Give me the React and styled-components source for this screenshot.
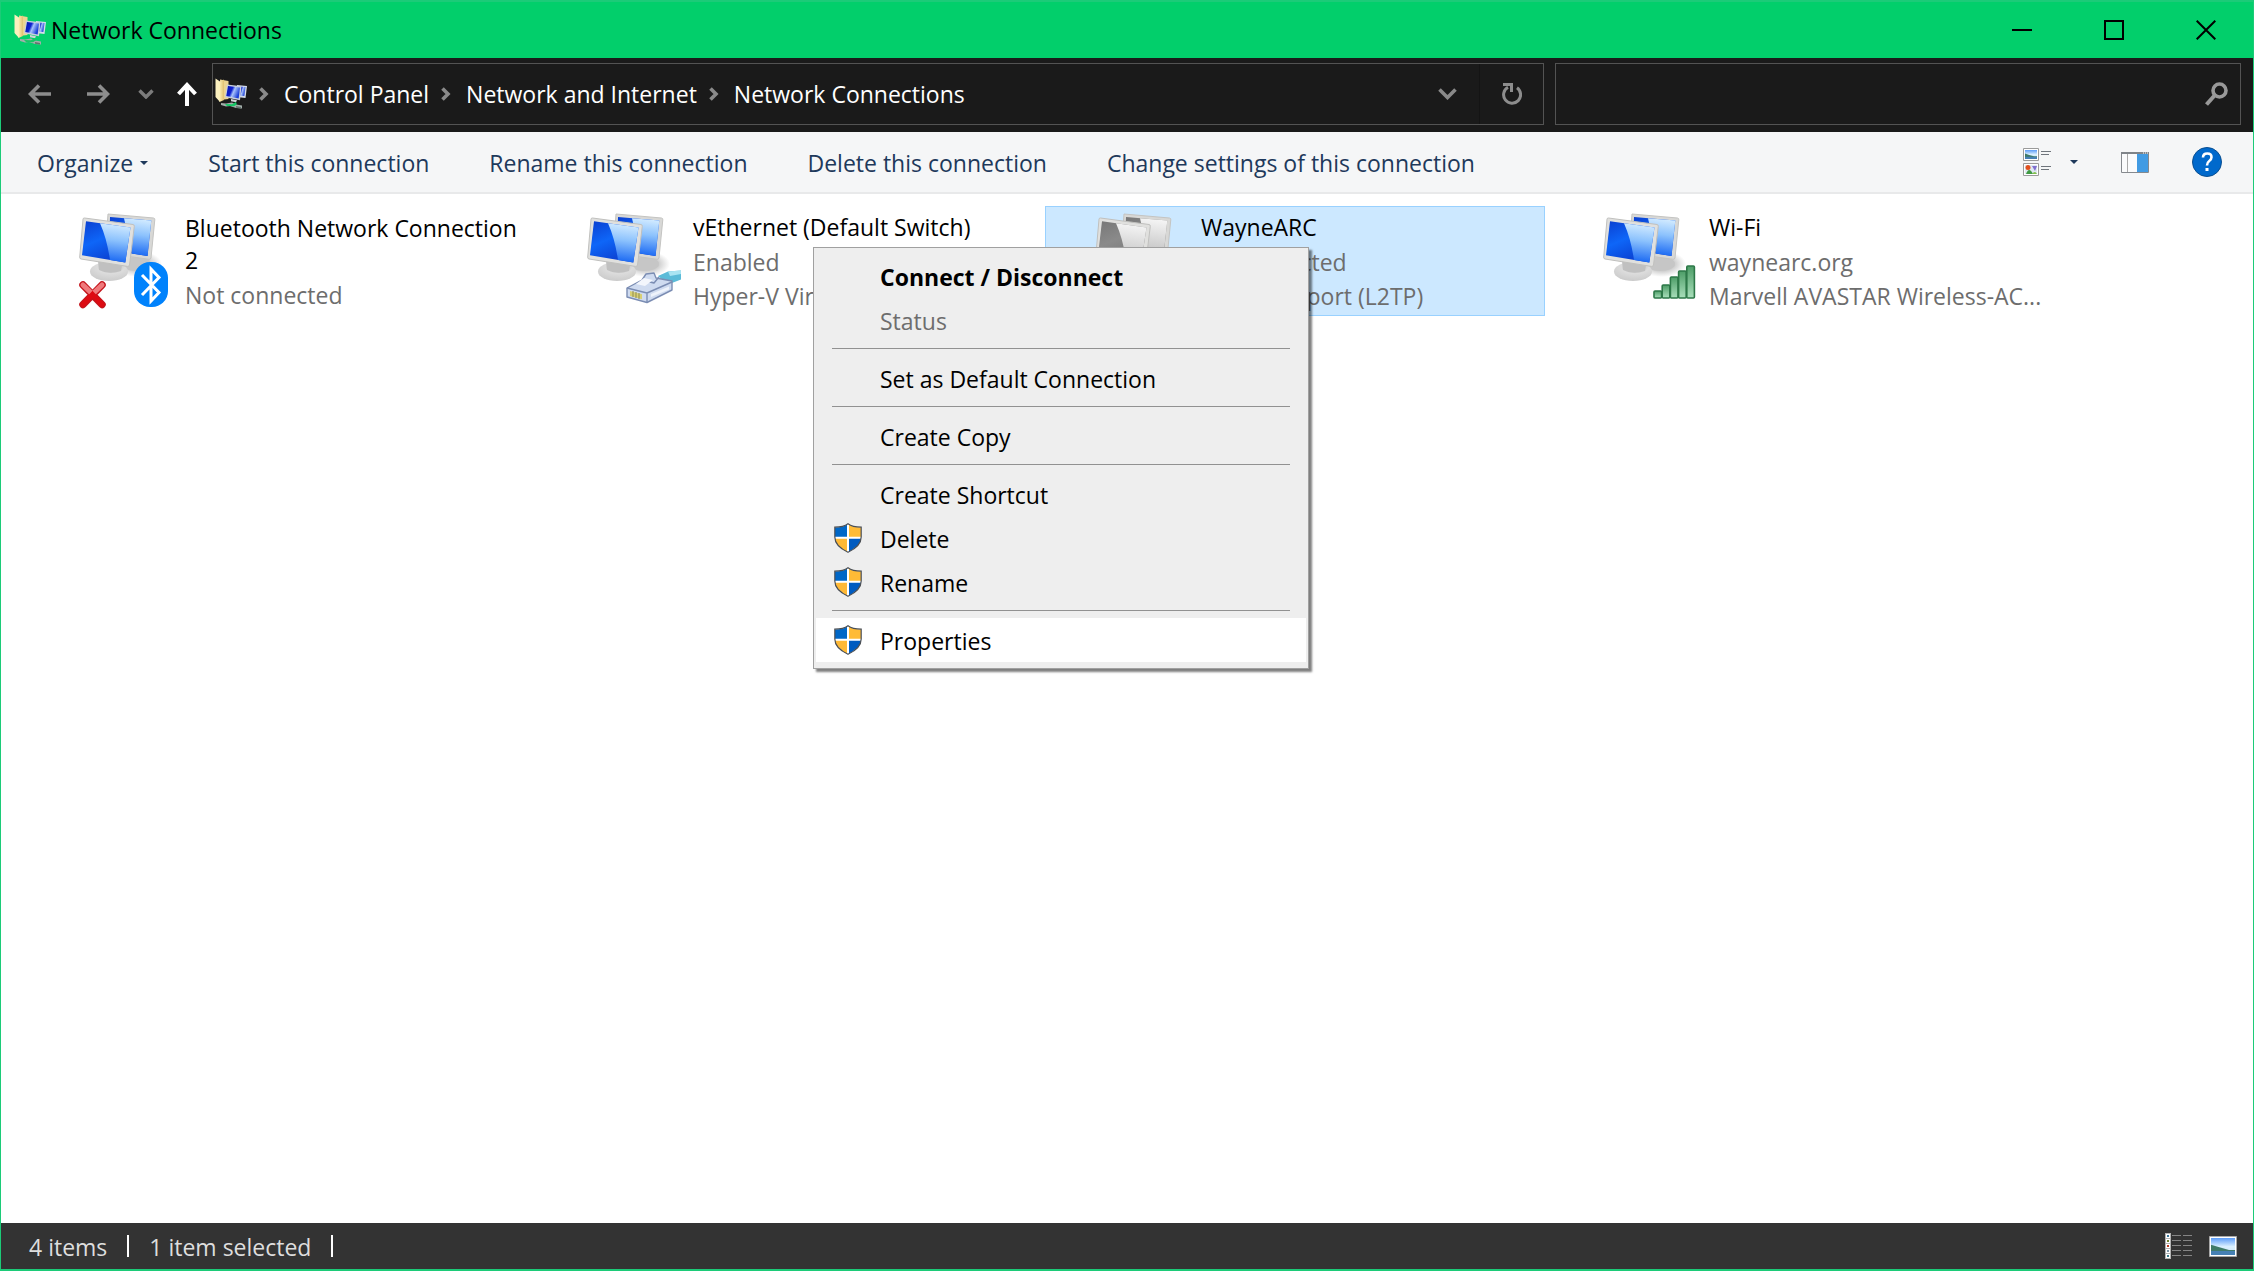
import React from "react";
import styled, { createGlobalStyle, css } from "styled-components";

const GlobalStyle = createGlobalStyle`
  *, *::before, *::after { box-sizing: border-box; }
  body { margin: 0; }
  body, button, input { font-family: "Open Sans", "Noto Sans", sans-serif; font-size: 23px; }
`;

const Window = styled.div`
  min-height: 100vh;
  display: flex;
  flex-direction: column;
  background: #ffffff;
  border: solid #1ccb78;
  border-width: 2px 1px;
  color: #000000;
  line-height: 32px;
`;

const plainButton = css`
  border: 0;
  padding: 0;
  margin: 0;
  background: transparent;
  color: inherit;
  line-height: 32px;
  white-space: nowrap;
  display: flex;
  align-items: center;
`;

const TitleBar = styled.header`
  height: 56px;
  flex: none;
  display: flex;
  align-items: center;
  background: #02cf6b;
  padding: 0 1px 0 13px;
`;

const WindowTitle = styled.h1`
  margin: 0 0 0 5px;
  font-size: 23px;
  font-weight: 400;
  flex: 1;
`;

const CaptionButton = styled.button`
  ${plainButton}
  width: 92px;
  height: 56px;
  justify-content: center;
`;

const NavBar = styled.nav`
  height: 74px;
  flex: none;
  display: flex;
  background: #1a1a1a;
  color: #ffffff;
  padding: 5px 12px 7px 27px;
`;

const NavButtons = styled.div`
  width: 184px;
  flex: none;
  display: flex;
  align-items: center;
`;

const NavButton = styled.button`
  ${plainButton}
  margin-right: ${(p) => p.$after || 0}px;
`;

const AddressBox = styled.div`
  flex: 1328 1 0;
  min-width: 0;
  border: 1px solid #535353;
  display: flex;
  align-items: center;
  padding-left: 2px;
`;

const Crumbs = styled.ol`
  list-style: none;
  margin: 0;
  padding: 0 0 0 12px;
  flex: 1;
  display: flex;
  align-items: center;
`;

const Crumb = styled.li`
  display: flex;
  align-items: center;
  gap: 15px;
  margin-right: 12px;
`;

const CrumbLink = styled.a`
  color: #ffffff;
  text-decoration: none;
  white-space: nowrap;
`;

const AddressButton = styled.button`
  ${plainButton}
  width: 64px;
  height: 60px;
  justify-content: center;
  border-left: ${(p) => (p.$divided ? "1px solid #141414" : "0")};
`;

const SearchBox = styled.form`
  flex: 672 1 0;
  min-width: 0;
  margin-left: 11px;
  border: 1px solid #535353;
  display: flex;
  align-items: center;
  padding-right: 12px;
`;

const SearchInput = styled.input`
  flex: 1;
  min-width: 0;
  height: 60px;
  border: 0;
  outline: 0;
  padding: 0 12px;
  background: transparent;
  color: #ffffff;
`;

const CommandBar = styled.div`
  height: 62px;
  flex: none;
  display: flex;
  align-items: center;
  background: #f5f6f7;
  border-bottom: 2px solid #e8e9ea;
  color: #1e395b;
  padding: 0 31px 0 36px;
`;

const Commands = styled.div`
  flex: 1;
  display: flex;
  gap: 60px;
  padding-top: 2px;
`;

const CommandButton = styled.button`
  ${plainButton}
  gap: ${(p) => p.$gap || 0}px;
`;

const ViewTools = styled.div`
  display: flex;
  align-items: center;
  gap: 43px;
`;

const Content = styled.main`
  flex: 1;
  position: relative;
  padding: 12px 28px;
`;

const Tiles = styled.ul`
  list-style: none;
  margin: 0;
  padding: 0;
  display: flex;
  flex-wrap: wrap;
  gap: 8px;
`;

const Tile = styled.li`
  width: 500px;
  height: 110px;
  display: flex;
  align-items: center;
  gap: 11px;
  padding: 0 8px 0 46px;
  border: 1px solid ${(p) => (p.$selected ? "#99d1ff" : "transparent")};
  background: ${(p) => (p.$selected ? "#cce8ff" : "transparent")};
`;

const TileText = styled.div`
  flex: 1;
  min-width: 0;
`;

const TileName = styled.div`
  line-height: 32px;
  padding: 1px 0 2px;
`;

const TileDetail = styled.div`
  line-height: 34px;
  color: #6d6d6d;
  white-space: nowrap;
`;

const ContextMenu = styled.div`
  position: absolute;
  left: 812px;
  top: 53px;
  width: 496px;
  padding: 6px 2px;
  background: #eeeeee;
  border: 1px solid #a0a0a0;
  box-shadow: 3px 3px 2px rgba(0, 0, 0, 0.5);
`;

const MenuItem = styled.button`
  ${plainButton}
  width: 100%;
  height: 44px;
  padding-left: 18px;
  text-align: left;
  font-weight: ${(p) => (p.$bold ? 700 : 400)};
  background: ${(p) => (p.$active ? "#ffffff" : "transparent")};
  &:disabled { color: #6d6d6d; }
`;

const MenuIcon = styled.span`
  width: 46px;
  height: 30px;
  flex: none;
`;

const MenuLabel = styled.span`
  padding-top: 2px;
`;

const MenuRule = styled.hr`
  height: 1px;
  border: 0;
  margin: 6px 16px 7px;
  background: #919191;
`;

const StatusBar = styled.footer`
  height: 46px;
  flex: none;
  display: flex;
  align-items: center;
  background: #333333;
  color: #dedede;
  padding: 0 16px 0 28px;
`;

const StatusText = styled.span`
  padding: 2px 20px 0 0;
  margin-right: 22px;
  position: relative;
  white-space: nowrap;
  &::after {
    content: "";
    position: absolute;
    right: -2px;
    top: 6px;
    width: 2px;
    height: 22px;
    background: #ffffff;
  }
`;

const StatusViews = styled.div`
  margin-left: auto;
  display: flex;
  align-items: center;
  gap: 16px;
`;

const Drawing = styled.svg`
  display: block;
  flex: none;
`;

const Svg = ({ w, h, children }) => (
  <Drawing width={w} height={h} viewBox={`0 0 ${w} ${h}`} fill="none" aria-hidden="true">
    {children}
  </Drawing>
);

const FolderNetworkIcon = ({ id }) => (
  <Svg w={32} h={32}>
    <defs>
      <linearGradient id={`${id}f`} x1="0" x2="1"><stop offset="0" stopColor="#fdf0b4" /><stop offset="1" stopColor="#dfc070" /></linearGradient>
      <linearGradient id={`${id}s`} x1="0" x2="1" y2="0.4"><stop offset="0" stopColor="#0512a8" /><stop offset="0.45" stopColor="#1023d0" /><stop offset="0.62" stopColor="#a9c4fb" /><stop offset="1" stopColor="#1c3fd8" /></linearGradient>
    </defs>
    <path d="M5 1.500 13.500 3v18l-8.500 1z" fill="#ecd591" />
    <path d="M0.500 0.500 5 3.500V24L0.500 19z" fill="#fbf0bf" />
    <path d="M4.500 4 9 1.500V22l-4.500 2z" fill={`url(#${id}f)`} />
    <path d="m22 7 10 1-1.500 12-8.500-1z" fill="#d5dcea" />
    <path d="m23.500 8.500 7 .6-1.200 9-5.800-.6z" fill={`url(#${id}s)`} />
    <path d="m12 6.500 14.500 1.800-1.500 14-15-3z" fill="#c9d0dc" />
    <path d="m13 8 12 1.500-1.300 11L11.300 18z" fill={`url(#${id}s)`} />
    <path d="m16 21 6 1.200-1 2-5-1z" fill="#d0d3d6" />
    <path d="m6 25 5 .5 6-1 4 2 6 1v3l-6-.5-6-2-4 .5-5-1.500z" fill="#a3aeaa" />
    <path d="m10 26 7 .2 4-2.200.8 2.500-2.800 1.700-7-.2z" fill="#14c765" />
    <path d="m21 28 5 1v1.500l-5-.7z" fill="#65736e" />
  </Svg>
);

const Monitors = ({ id, grey, children }) => {
  const dark = grey ? "#777777" : "#0b3fd0";
  const mid = grey ? "#8a8a8a" : "#0e66f8";
  const light = grey ? "#f4f4f4" : "#cfe9ff";
  return (
    <Svg w={98} h={96}>
      <defs>
        <linearGradient id={`${id}a`} x1="0" y1="0" x2="0.5" y2="1"><stop offset="0" stopColor={dark} /><stop offset="0.5" stopColor={mid} /><stop offset="1" stopColor={dark} /></linearGradient>
        <linearGradient id={`${id}b`} x1="0.2" y1="0" x2="0.1" y2="1"><stop offset="0" stopColor={light} /><stop offset="0.4" stopColor={grey ? "#dedede" : "#8cc2fd"} /><stop offset="1" stopColor={grey ? "#bdbdbd" : "#0f60f2"} /></linearGradient>
        <radialGradient id={`${id}c`} cx="0.55" cy="0.25" r="0.8"><stop offset="0" stopColor="#a8a8a8" /><stop offset="0.45" stopColor="#dcdcdc" /><stop offset="1" stopColor="#c9c9c9" /></radialGradient>
        <radialGradient id={`${id}d`}><stop offset="0" stopColor="#6f6f6f" stopOpacity="0.8" /><stop offset="1" stopColor="#888888" stopOpacity="0" /></radialGradient>
      </defs>
      <ellipse cx="62" cy="51" rx="24" ry="13" fill={`url(#${id}d)`} />
      <ellipse cx="60" cy="51" rx="15" ry="7" fill="#c6c6c6" />
      <path d="M32 1 77.500 5q1.500.2 1.300 1.800L75 45q-.3 1.500-2 1.300L29 40z" fill="#d8d8d6" stroke="#c4c4c2" strokeWidth="1" />
      <path d="M34 4 75.300 7.500 71.500 43 33 37z" fill={`url(#${id}a)`} />
      <path d="m48 5.200 27.300 2.300-3.800 35.500L56 40.500z" fill={`url(#${id}b)`} />
      <ellipse cx="33" cy="58.500" rx="19" ry="9.500" fill={`url(#${id}c)`} />
      <path d="m22 48 24 4-1 6q-12 4-22-1z" fill="#c0c0c0" />
      <path d="M8.500 5 57 11.500q1.500.3 1.300 1.800L53.500 52q-.4 1.700-2 1.400L5 46q-1.500-.3-1.300-1.800L7 6.200Q7.200 4.800 8.500 5z" fill="#e0e0de" stroke="#c0c0be" strokeWidth="1" />
      <path d="M10 8.200 54.500 14.500 49.300 49.500 6 42.300z" fill={`url(#${id}a)`} />
      <path d="M24 10.200 54.500 14.500 49.300 49.500 34 47Q31 26 24 10.200z" fill={`url(#${id}b)`} />
      {children}
    </Svg>
  );
};

const RedCross = () => (
  <g strokeLinecap="round">
    <path d="M7 72 26 91.500M26 72 7 91.500" stroke="#c4141c" strokeWidth="7.500" />
    <path d="M7 72 16.500 81 26 72" stroke="#ef7a7c" strokeWidth="5" />
    <path d="M7 91.500 16.500 81.500 26 91.500" stroke="#dd0b12" strokeWidth="5" />
  </g>
);

const BluetoothBadge = () => (
  <g>
    <rect x="58" y="49" width="34" height="45" rx="16" fill="#0082fc" />
    <path d="M66 62 83 79.500 75 88V56l8 8.500L66 82" stroke="#ffffff" strokeWidth="3" />
  </g>
);

const EthernetPlug = () => (
  <g strokeLinejoin="round">
    <path d="m74 63 10-4.500 13-1v9l-13 5z" fill="#5bbbd8" />
    <path d="m84 58.500 13-1v3.500l-11 2z" fill="#a9e4f2" />
    <path d="m43 75 15-8 4-6 8-1 2 5 16 3v9L63 89.500 43 84z" fill="#cfdbf0" stroke="#7b8db3" strokeWidth="1.400" />
    <path d="m43 75 20 5 25-11M63 80v9.500M58 67l12 3 5-6" stroke="#7b8db3" strokeWidth="1.400" />
    <path d="m52 71 8-6 9 2-8 6z" fill="#f3f6fc" />
    <path d="m46 78 12 3.200v5L46 83z" fill="#d8cf73" />
    <path d="M49 78v6M52 79v6M55 80v6" stroke="#8d8b52" />
    <path d="m67 81 18-7.500v3L67 84z" fill="#eef3fb" />
  </g>
);

const SignalBars = () => (
  <g>
    <defs><linearGradient id="bars" x1="0" y1="0" x2="0" y2="1"><stop offset="0" stopColor="#4d9d67" /><stop offset="1" stopColor="#a9dfbb" /></linearGradient></defs>
    {[78, 72, 64, 58, 53].map((top, i) => (
      <rect key={top} x={54 + i * 8.2} y={top} width="7.600" height={85 - top} rx="1" fill="url(#bars)" stroke="#2d7848" strokeWidth="1.600" />
    ))}
  </g>
);

const Shield = () => (
  <Svg w={28} h={30}>
    <path d="M14 1C10.500 3.800 6 4.500 1 4.500V14c0 7 6 11.500 13 15V1z" fill="#0067c7" />
    <path d="M14 1c3.500 2.800 8 3.500 13 3.500V14H14z" fill="#ffbb36" />
    <path d="M1 15h13v14C7 25.500 1.500 21 1 15z" fill="#ffb936" />
    <path d="M14 15h13c-.5 6-6 10.500-13 14z" fill="#005bc0" />
    <path d="M14 1v28M1 14.800h26" stroke="#ffffff" strokeWidth="2" />
    <path d="M14 .8C10.500 3.500 6 4.200.8 4.200V14c0 7 6.200 12 13.200 15.300C21 26 27.200 21 27.200 14V4.200C22 4.200 17.500 3.500 14 .8z" stroke="#4b4f54" strokeWidth="1.200" />
  </Svg>
);

const CrumbChevron = () => (
  <Svg w={10} h={14}><path d="m1.500 1.500 5.500 5.500-5.500 5.500" stroke="#8a8a8a" strokeWidth="3.600" /></Svg>
);

const Caret = () => <Svg w={8} h={4}><path d="M0 0h8L4 4z" fill="#1e395b" /></Svg>;

const Landscape = ({ x, y, w, h, id }) => (
  <g>
    <defs><linearGradient id={id} x1="0" y1="0" x2="0" y2="1"><stop offset="0" stopColor="#5b9bf8" /><stop offset="0.5" stopColor="#d9efff" /><stop offset="1" stopColor="#cfe5f5" /></linearGradient></defs>
    <rect x={x} y={y} width={w} height={h} fill={`url(#${id})`} />
    <path d={`M${x} ${y + h * 0.4}l${w * 0.35} ${h * 0.15} ${w * 0.4} ${h * 0.15}h${w * 0.25}v${h * 0.1}h${-w}z`} fill="#3f7a68" />
    <rect x={x} y={y + h * 0.76} width={w} height={h * 0.24} fill="#4680b4" />
  </g>
);

const connections = [
  { name: "Bluetooth Network Connection 2", details: ["Not connected"], badge: <><RedCross /><BluetoothBadge /></> },
  { name: "vEthernet (Default Switch)", details: ["Enabled", "Hyper-V Virtual Ethernet..."], badge: <EthernetPlug /> },
  { name: "WayneARC", details: ["Disconnected", "WAN Miniport (L2TP)"], selected: true },
  { name: "Wi-Fi", details: ["waynearc.org", "Marvell AVASTAR Wireless-AC..."], badge: <SignalBars /> },
];

const menu = [
  { label: "Connect / Disconnect", bold: true },
  { label: "Status", disabled: true },
  null,
  { label: "Set as Default Connection" },
  null,
  { label: "Create Copy" },
  null,
  { label: "Create Shortcut" },
  { label: "Delete", shield: true },
  { label: "Rename", shield: true },
  null,
  { label: "Properties", shield: true, active: true },
];

export default function App() {
  return (
    <Window>
      <GlobalStyle />
      <TitleBar>
        <FolderNetworkIcon id="t" />
        <WindowTitle>Network Connections</WindowTitle>
        <CaptionButton aria-label="Minimize"><Svg w={20} h={20}><path d="M0 10h20" stroke="#000" strokeWidth="2" /></Svg></CaptionButton>
        <CaptionButton aria-label="Maximize"><Svg w={20} h={20}><path d="M1 1h18v18H1z" stroke="#000" strokeWidth="2" /></Svg></CaptionButton>
        <CaptionButton aria-label="Close"><Svg w={20} h={20}><path d="m.7.7 18.600 18.600M19.300.7.7 19.300" stroke="#000" strokeWidth="2" /></Svg></CaptionButton>
      </TitleBar>

      <NavBar aria-label="Address">
        <NavButtons>
          <NavButton aria-label="Back" $after={34}><Svg w={24} h={20}><path d="M23 10H3M11 1.500 2.500 10l8.500 8.500" stroke="#8d8d8d" strokeWidth="3.600" /></Svg></NavButton>
          <NavButton aria-label="Forward" $after={28}><Svg w={24} h={20}><path d="M1 10h20M13 1.500l8.500 8.500-8.500 8.500" stroke="#8d8d8d" strokeWidth="3.600" /></Svg></NavButton>
          <NavButton aria-label="Recent locations" $after={23}><Svg w={16} h={10}><path d="m1.500 1.500 6.500 6.500 6.500-6.500" stroke="#7c7c7c" strokeWidth="3.400" /></Svg></NavButton>
          <NavButton aria-label="Up"><Svg w={20} h={24}><path d="M10 24V4M1.500 12 10 3l8.500 9" stroke="#fff" strokeWidth="4" /></Svg></NavButton>
        </NavButtons>
        <AddressBox>
          <FolderNetworkIcon id="n" />
          <Crumbs>
            {["Control Panel", "Network and Internet", "Network Connections"].map((c) => (
              <Crumb key={c}><CrumbChevron /><CrumbLink href="#">{c}</CrumbLink></Crumb>
            ))}
          </Crumbs>
          <AddressButton aria-label="Previous locations"><Svg w={19} h={12}><path d="m1.500 1.500 8 8 8-8" stroke="#8a8a8a" strokeWidth="3.600" /></Svg></AddressButton>
          <AddressButton aria-label="Refresh" $divided>
            <Svg w={20} h={22}><path d="M15 4.800a8.500 8.500 0 1 1-9 -.5" stroke="#8d8d8d" strokeWidth="3" /><path d="M1 1.500h8.500v7.500" stroke="#8d8d8d" strokeWidth="3" /></Svg>
          </AddressButton>
        </AddressBox>
        <SearchBox role="search">
          <SearchInput aria-label="Search Network Connections" />
          <Svg w={23} h={24}><circle cx="14.500" cy="8.500" r="6.500" stroke="#999" strokeWidth="3.600" /><path d="m10 13-8.500 9.500" stroke="#999" strokeWidth="4" /></Svg>
        </SearchBox>
      </NavBar>

      <CommandBar>
        <Commands>
          <CommandButton $gap={7}>Organize<Caret /></CommandButton>
          <CommandButton>Start this connection</CommandButton>
          <CommandButton>Rename this connection</CommandButton>
          <CommandButton>Delete this connection</CommandButton>
          <CommandButton>Change settings of this connection</CommandButton>
        </Commands>
        <ViewTools>
          <CommandButton aria-label="Change your view" $gap={19}>
            <Svg w={28} h={28}>
              <path d="M.5.5h15v12H.5zM.5 15.500h15v12H.5z" fill="#fff" stroke="#9a9a9a" />
              <Landscape id="v" x={2} y={2} w={12} h={9} />
              <rect x="2" y="17" width="12" height="9" fill="#dfe8f2" />
              <circle cx="5" cy="19.500" r="2.500" fill="#e2501e" />
              <path d="m9 18 5 0-2 5z" fill="#8170cf" />
              <path d="M3 26q3-8 7 0z" fill="#3f9a43" /><path d="M9 26q3-4 5 0z" fill="#7fbf4d" />
              <path d="M18 3.500h10M18 6.500h8M18 18.500h10M18 21.500h8" stroke="#6f757c" />
            </Svg>
            <Caret />
          </CommandButton>
          <CommandButton aria-label="Preview pane">
            <Svg w={28} h={21}>
              <path d="M.5.5h27v20H.5z" fill="#fafbfc" stroke="#85898e" />
              <path d="M0 0h28v2H0z" fill="#7f8489" /><path d="M6.500 2v18" stroke="#aaa" />
              <path d="M16 2h11v18H16z" fill="#419be3" /><path d="M22 1h1m1 0h1m1 0h1" stroke="#fff" />
            </Svg>
          </CommandButton>
          <CommandButton aria-label="Help">
            <Svg w={30} h={30}>
              <circle cx="15" cy="15" r="14.500" fill="#0069cc" stroke="#0a4f91" />
              <path d="M11 10.500q0-4 4.300-4 4.200 0 4.200 3.700 0 2.300-2.500 4-2 1.400-2 4.300" stroke="#fff" strokeWidth="2.600" />
              <rect x="13.500" y="21" width="3" height="3" fill="#fff" />
            </Svg>
          </CommandButton>
        </ViewTools>
      </CommandBar>

      <Content>
        <Tiles>
          {connections.map((c, i) => (
            <Tile key={c.name} $selected={c.selected}>
              <Monitors id={`m${i}`} grey={c.selected}>{c.badge}</Monitors>
              <TileText>
                <TileName>{c.name}</TileName>
                {c.details.map((d) => <TileDetail key={d}>{d}</TileDetail>)}
              </TileText>
            </Tile>
          ))}
        </Tiles>
        <ContextMenu role="menu">
          {menu.map((m, i) =>
            m ? (
              <MenuItem key={m.label} role="menuitem" disabled={m.disabled} $bold={m.bold} $active={m.active}>
                <MenuIcon>{m.shield && <Shield />}</MenuIcon>
                <MenuLabel>{m.label}</MenuLabel>
              </MenuItem>
            ) : (
              <MenuRule key={i} />
            )
          )}
        </ContextMenu>
      </Content>

      <StatusBar>
        <StatusText>4 items</StatusText>
        <StatusText>1 item selected</StatusText>
        <StatusViews>
          <CommandButton aria-label="Details view">
            <Svg w={28} h={26}>
              <path d="M0 0h6v26H0z" fill="#b4b4b4" />
              {["#39799d", "#71812f", "#bd3b1f", "#7c93a5", "#397b8c"].map((c, i) => (
                <g key={c}>
                  <rect x="1" y={1 + i * 5} width="4" height="4" fill="#fff" />
                  <rect x="2" y={2 + i * 5} width="2" height="2" fill={c} />
                  <path d={`M7 ${2.5 + i * 5}h9m2 0h9`} stroke="#858585" />
                </g>
              ))}
            </Svg>
          </CommandButton>
          <CommandButton aria-label="Large icons view">
            <Svg w={28} h={21}>
              <path d="M.5.5h27v20H.5z" fill="#fff" stroke="#a7a7a7" />
              <Landscape id="l" x={2} y={2} w={24} h={17} />
            </Svg>
          </CommandButton>
        </StatusViews>
      </StatusBar>
    </Window>
  );
}
